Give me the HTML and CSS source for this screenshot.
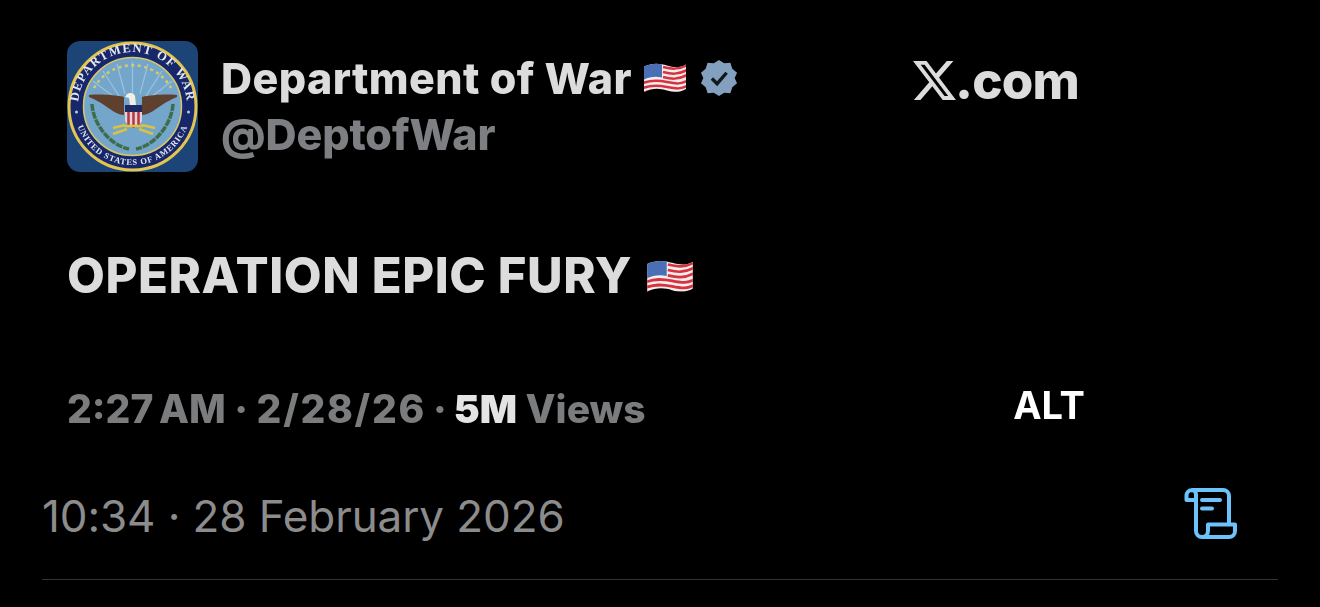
FILE: index.html
```html
<!DOCTYPE html>
<html lang="en">
<head>
<meta charset="utf-8">
<title>Department of War</title>
<link rel="stylesheet" href="styles.css">
</head>
<body>
<svg class="defs" width="0" height="0" aria-hidden="true">
  <defs>
    <symbol id="flag" viewBox="0 0 44 32">
      <clipPath id="wave"><path d="M1 4.500C10 .5 17 1.500 24 3.500S37 6 43 2.500V27C37 30.500 31 30.500 24 28.500S10 25.500 1 30Z"/></clipPath>
      <g clip-path="url(#wave)" fill="none">
        <rect width="44" height="32" fill="#f3eeee"/>
        <g stroke="#d8323f" stroke-width="2.500">
          <path d="M20 5c8 2 15 3 24-2"/>
          <path d="M20 10c8 2 15 3 24-2"/>
          <path d="M20 15c8 2 15 3 24-2"/>
          <path d="M0 21c8-3 14-3 24-1s14 2 20-1"/>
          <path d="M0 26c8-3 14-3 24-1s14 2 20-1"/>
          <path d="M0 31c8-3 14-3 24-1s14 2 20-1"/>
        </g>
        <path d="M0 0H19V15.500C12 14 6 15 0 18Z" fill="#4a6fb5"/>
      </g>
    </symbol>
  </defs>
</svg>

<main class="page">
  <section class="embed">
    <header class="embed-head">
      <svg class="seal" viewBox="0 0 131 131" role="img" aria-label="Department of War seal">
        <defs>
          <path id="arc-top" d="M11 65.500a54.500 54.500 0 0 1 109 0"/>
          <path id="arc-bottom" d="M7 65.500a58.500 58.500 0 0 0 117 0"/>
        </defs>
        <rect width="131" height="131" rx="13" fill="#1c4477"/>
        <circle cx="65.500" cy="65.500" r="63.500" fill="#17276b" stroke="#e3c650" stroke-width="3"/>
        <circle cx="65.500" cy="65.500" r="49" fill="#74a6cc" stroke="#d9c765" stroke-width="1.500"/>
        <g stroke="#9cc2dc" stroke-width="1.200">
          <path d="M65.500 53V21M58 53 50 23M73 53 81 23M52 55 36 30M79 55 95 30M47 56 26 40M84 56 105 40"/>
        </g>
        <path d="M27 47A44 44 0 0 1 104 47" fill="none" stroke="#d5cc62" stroke-width="2.500" stroke-dasharray="3 3.500"/>
        <text class="seal-top"><textPath href="#arc-top" startOffset="50%">DEPARTMENT OF WAR</textPath></text>
        <text class="seal-bottom"><textPath href="#arc-bottom" startOffset="50%">UNITED STATES OF AMERICA</textPath></text>
        <circle cx="9.500" cy="71" r="1.500" fill="#b9cbe0"/>
        <circle cx="121.500" cy="71" r="1.500" fill="#b9cbe0"/>
        <path d="M22 54C34 53 48 54 57 56L57 74C47 74 38 62 22 56Z" fill="#5f3f2e"/>
        <path d="M110 54C98 53 84 54 75 56L75 74C85 74 94 62 110 56Z" fill="#5f3f2e"/>
        <path d="M60 53c3-2 7-1 8 2l1 9h-6l-1-7-4-1z" fill="#f2efe6"/>
        <rect x="58" y="64" width="17" height="7" fill="#1d2a66"/>
        <path d="M58 71H75V80Q73 85 66.500 87Q60 85 58 80Z" fill="#e3d3d6"/>
        <path d="M61.500 71V85M66.500 71V87M71.500 71V85" stroke="#b8343f" stroke-width="2.500"/>
        <path d="M46 93 60 88M46 87 58 84M86 93 72 88M88 87 75 84M57 85h19" stroke="#d9c33f" stroke-width="2.500" fill="none"/>
        <path d="M25 63C26 82 42 104 62 108" fill="none" stroke="#3f6d4c" stroke-width="3.500" stroke-dasharray="7 1"/>
        <path d="M106 63C105 82 89 104 69 108" fill="none" stroke="#3f6d4c" stroke-width="3.500" stroke-dasharray="7 1"/>
      </svg>
      <div class="identity">
        <div class="name-row">
          <span class="name">Department of War</span>
          <svg class="flag-small"><use href="#flag"/></svg>
          <svg class="badge" viewBox="0 0 40 40" aria-label="Verified">
            <path d="M20 1l5.500 3.500 6.500-.5 2 6.200 5 4.300-2.500 5.500 2.500 5.500-5 4.300-2 6.200-6.500-.5L20 39l-5.500-3.500-6.500.5-2-6.200-5-4.300L3.500 20 1 14.500l5-4.300L8 4l6.500.5z" fill="#83a0be"/>
            <path d="M12.500 20.500l5.500 5.500 10-11.500" fill="none" stroke="#101820" stroke-width="3.500"/>
          </svg>
        </div>
        <div class="handle">@DeptofWar</div>
      </div>
      <div class="brand">
        <svg class="x-logo" viewBox="1.250 2.250 21.600 19.500" aria-hidden="true"><path d="M18.244 2.250h3.308l-7.227 8.260 8.502 11.240H16.170l-5.214-6.817L4.990 21.750H1.680l7.730-8.835L1.254 2.250H8.080l4.713 6.231zm-1.161 17.520h1.833L7.084 4.126H5.117z" fill="#dcdcdc"/></svg>
        <span class="brand-text">.com</span>
      </div>
    </header>
    <p class="headline">OPERATION EPIC FURY <svg class="flag-large"><use href="#flag"/></svg></p>
    <div class="meta-row">
      <p class="meta"><span class="meta-time">2:27 AM</span> · <span class="meta-date">2/28/26</span><span class="meta-sep"> · </span><b class="views-count">5M</b> Views</p>
      <span class="alt">ALT</span>
    </div>
  </section>
  <div class="stamp-row">
    <time class="stamp">10:34 · 28 February 2026</time>
    <svg class="scroll" viewBox="0 0 54 54" aria-hidden="true">
      <path d="M8 3H39a6 6 0 0 1 6 6V36M8 3a5.500 5.500 0 0 0-5.500 5.500V13H12M8 3a4.500 4.500 0 0 1 4 5V44a6 6 0 0 0 6 6H45a6 6 0 0 0 6-6V37.500H24V44a6 6 0 0 1-6 6M18 13H36M18 21.500H28" fill="none" stroke="#6cc2fb" stroke-width="4" stroke-linecap="round" stroke-linejoin="round"/>
    </svg>
  </div>
  <hr class="divider">
</main>
</body>
</html>
```
FILE: styles.css
```css
html, body {
  margin: 0;
  height: 100%;
  background: #000;
  overflow: hidden;
}

.defs {
  display: block;
  height: 0;
}

.page {
  display: flex;
  flex-direction: column;
  height: 607px;
  padding: 0 42px;
  box-sizing: border-box;
  font-family: Inter, "Liberation Sans", sans-serif;
}

.embed {
  padding: 41px 0 0 25px;
  filter: blur(0.5px);
}

.embed-head {
  display: flex;
  align-items: flex-start;
}

.seal {
  width: 131px;
  height: 131px;
  flex: none;
  filter: blur(0.4px);
}

.seal-top,
.seal-bottom {
  font-family: "Liberation Serif", serif;
  font-weight: 700;
  fill: #e6e8ee;
  text-anchor: middle;
}

.seal-top {
  font-size: 12.500px;
  letter-spacing: 1.300px;
}

.seal-bottom {
  font-size: 8.500px;
  letter-spacing: 0.800px;
}

.identity {
  margin-left: 23px;
  width: 692px;
  flex: none;
}

.name-row {
  display: flex;
  align-items: center;
  height: 74px;
}

.name {
  font-size: 43px;
  font-weight: 800;
  color: #dcdcdc;
  letter-spacing: 0.400px;
  white-space: nowrap;
}

.flag-small {
  width: 44px;
  height: 32px;
  margin-left: 11px;
}

.badge {
  width: 38px;
  height: 38px;
  margin-left: 13px;
}

.handle {
  margin-top: -5px;
  font-size: 43px;
  font-weight: 800;
  line-height: 48px;
  color: #7d7f82;
  letter-spacing: -0.100px;
}

.brand {
  display: flex;
  align-items: center;
  height: 78px;
}

.x-logo {
  width: 43px;
  height: 39px;
  flex: none;
}

.brand-text {
  margin-left: -1px;
  font-size: 51px;
  font-weight: 800;
  color: #dcdcdc;
  letter-spacing: -0.800px;
}

.headline {
  display: flex;
  align-items: center;
  gap: 14px;
  margin: 74px 0 0;
  font-size: 49px;
  line-height: 60px;
  font-weight: 800;
  color: #dcdcdc;
  letter-spacing: 0.600px;
  white-space: nowrap;
}

.flag-large {
  width: 48px;
  height: 35px;
}

.meta-row {
  display: flex;
  align-items: center;
  justify-content: space-between;
  margin-top: 77px;
  padding-right: 193px;
  height: 50px;
}

.meta {
  margin: 0;
  font-size: 39px;
  font-weight: 800;
  color: #7a7c7e;
  white-space: nowrap;
}

.meta-time {
  word-spacing: -3px;
}

.meta-date {
  letter-spacing: 1.700px;
}

.meta-sep {
  word-spacing: -1.500px;
}

.views-count {
  color: #e4e4e4;
}

.alt {
  font-size: 38px;
  font-weight: 700;
  color: #fff;
  position: relative;
  top: -3px;
}

.stamp-row {
  display: flex;
  align-items: center;
  justify-content: space-between;
  margin-top: 55px;
  padding-right: 40px;
  height: 56px;
}

.stamp {
  font-size: 44px;
  font-weight: 400;
  color: #8c8c8c;
  letter-spacing: -0.100px;
  white-space: nowrap;
}

.scroll {
  width: 54px;
  height: 54px;
  flex: none;
  margin-bottom: 5px;
}

.divider {
  width: 100%;
  margin: 35px 0 0;
  border: 0;
  border-top: 1px solid #333;
}
```
